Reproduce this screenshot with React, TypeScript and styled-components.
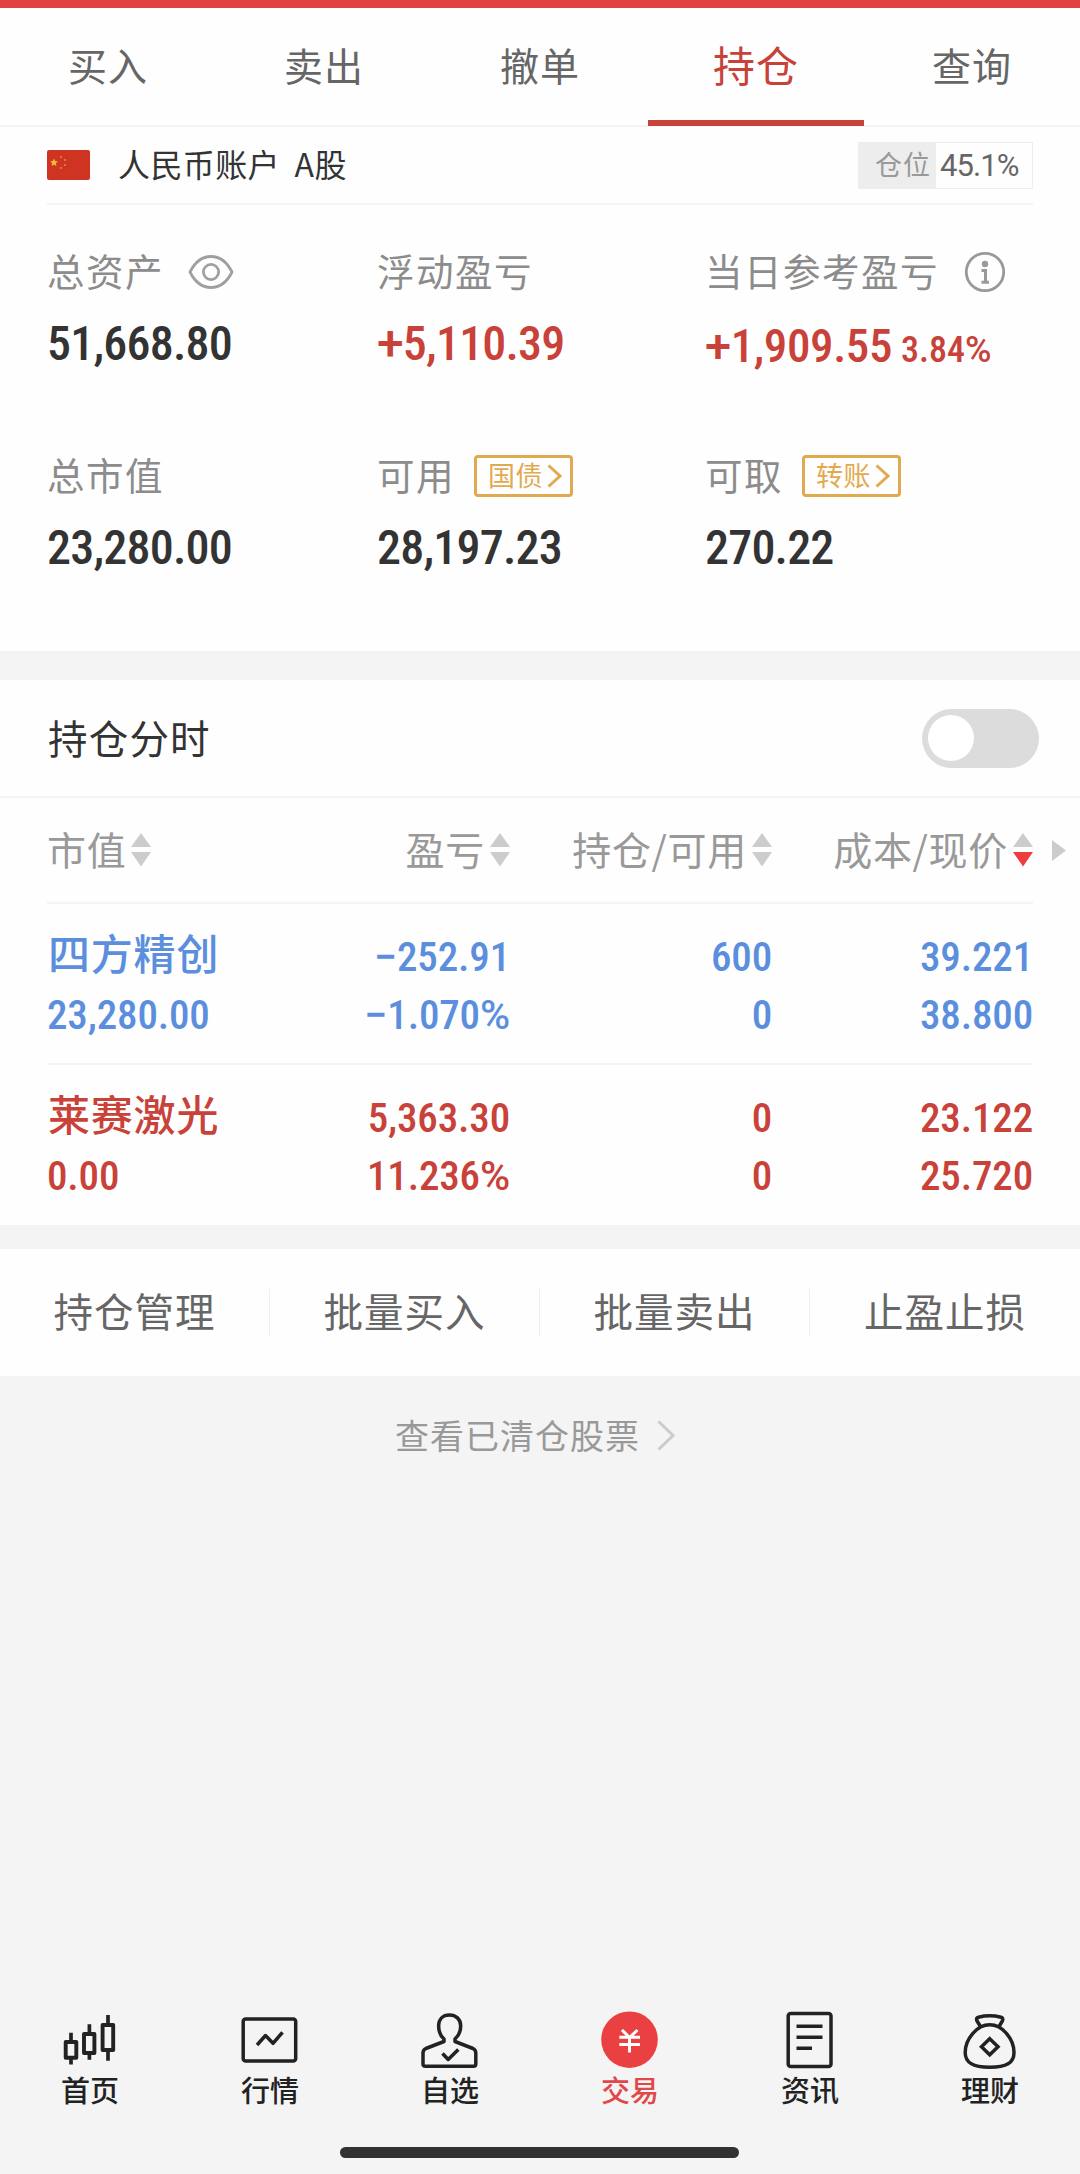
import React from "react";
import styled, { createGlobalStyle } from "styled-components";

const cjk = `"Noto Sans CJK SC", sans-serif`;
const din = `Roboto, "Noto Sans CJK SC", sans-serif`;
const red = "#c8423a";
const blue = "#5b8fde";
const ink = "#333333";

const GlobalStyle = createGlobalStyle`
  * { box-sizing: border-box; }
  body { margin: 0; background: #f4f4f4; font-family: ${cjk}; }
`;

const Screen = styled.div`
  width: 1080px;
  height: 2174px;
  display: flex;
  flex-direction: column;
  background: #f4f4f4;
  overflow: hidden;
`;

const StatusStrip = styled.div`
  height: 8px;
  flex: none;
  background: #e0433f;
`;

const Tabs = styled.nav`
  height: 119px;
  flex: none;
  display: grid;
  grid-template-columns: repeat(5, 1fr);
  background: #fefefe;
  border-bottom: 2px solid #f4f4f4;
`;

const Tab = styled.div<{ $active?: boolean }>`
  height: 118px;
  display: flex;
  justify-content: center;
  font-size: ${(p) => (p.$active ? 42 : 39)}px;
  letter-spacing: 1px;
  line-height: ${(p) => (p.$active ? 112 : 113)}px;
  color: ${(p) => (p.$active ? red : "#666666")};
  border-bottom: ${(p) => (p.$active ? `6px solid ${red}` : "none")};
`;

const Summary = styled.section`
  height: 524px;
  flex: none;
  padding: 0 47px;
  background: #fefefe;
`;

const AccountBar = styled.div`
  height: 78px;
  display: flex;
  align-items: center;
  border-bottom: 2px solid #f4f4f4;
`;

const AccountName = styled.span`
  margin-left: 28px;
  flex: 1;
  height: 70px;
  font-size: 32px;
  line-height: 66px;
  letter-spacing: 0.4px;
  word-spacing: 7px;
  color: ${ink};
`;

const Position = styled.div`
  width: 175px;
  height: 47px;
  display: flex;
  border: 1px solid #eeeeee;
`;

const PositionLabel = styled.span`
  width: 77px;
  padding-left: 16px;
  background: #ededed;
  color: #999999;
  font-size: 27px;
  letter-spacing: 1px;
  line-height: 42px;
`;

const PositionValue = styled.span`
  padding-left: 4px;
  color: #666666;
  font-family: ${din};
  font-size: 31px;
  font-stretch: 94%;
  letter-spacing: -0.9px;
  line-height: 46px;
`;

const Stats = styled.div`
  display: grid;
  grid-template-columns: 330px 328px 1fr;
  grid-auto-rows: 204px;
  padding-top: 35px;
`;

const StatLabel = styled.div`
  height: 64px;
  display: flex;
  align-items: center;
  font-size: 37.5px;
  letter-spacing: 1.5px;
  line-height: 60px;
  color: #8c8c8c;

  svg { flex: none; }
`;

const LabelText = styled.span<{ $gap?: number }>`
  height: 64px;
  line-height: 60px;
  margin-right: ${(p) => p.$gap ?? 0}px;
`;

const StatValue = styled.div<{ $color?: string; $low?: boolean }>`
  height: 80px;
  display: flex;
  align-items: baseline;
  line-height: ${(p) => (p.$low ? 83 : 80)}px;
  white-space: nowrap;
  color: ${(p) => p.$color ?? ink};
`;

const Digits = styled.span<{ $size: number; $gap?: number; $tight?: number }>`
  font-family: ${din};
  font-size: ${(p) => p.$size}px;
  font-weight: 500;
  font-stretch: 84%;
  letter-spacing: ${(p) => p.$tight ?? 0}px;
  margin-left: ${(p) => p.$gap ?? 0}px;
`;

const Wide = styled.span`
  font-stretch: 100%;
`;

/* Signs and percent marks are set wider than the condensed digits. */
const Num = ({ children, size, gap, tight }: { children: string; size: number; gap?: number; tight?: number }) => (
  <Digits $size={size} $gap={gap} $tight={tight}>
    {children.split(/([+−%])/).map((part, i) => (i % 2 ? <Wide key={i}>{part}</Wide> : part))}
  </Digits>
);

const Tag = styled.span`
  width: 99px;
  height: 42px;
  display: flex;
  align-items: center;
  border: 3px solid #e2aa50;
  border-radius: 4px;
  padding-left: 11px;
  color: #e2aa50;
  font-size: 27px;
  letter-spacing: 0.5px;
  line-height: 32px;
`;

const TagText = styled.span`
  height: 36px;
  line-height: 33px;
  margin-right: 4px;
`;

const Gap = styled.div<{ $h: number }>`
  height: ${(p) => p.$h}px;
  flex: none;
`;

const SwitchRow = styled.div`
  height: 118px;
  flex: none;
  display: flex;
  align-items: center;
  justify-content: space-between;
  padding: 0 41px 0 48px;
  background: #fefefe;
  border-bottom: 2px solid #f4f4f4;
  font-size: 39.5px;
  letter-spacing: 1.2px;
  color: ${ink};
`;

const SwitchText = styled.span`
  line-height: 81px;
  height: 84px;
`;

const Toggle = styled.button`
  width: 117px;
  height: 59px;
  padding: 6px;
  border: 0;
  border-radius: 30px;
  background: #dcdcdc;
`;

const Knob = styled.span`
  display: block;
  width: 46px;
  height: 46px;
  border-radius: 50%;
  background: #ffffff;
`;

const Table = styled.section`
  height: 427px;
  flex: none;
  background: #fefefe;
  padding: 0 47px;
`;

const columns = "200px 263px 262px 261px";

const HeadRow = styled.div`
  display: grid;
  grid-template-columns: ${columns} 33px;
  width: 1019px;
  height: 104px;
  align-items: center;
`;

const Rule = styled.div`
  height: 2px;
  background: #f4f4f4;
`;

const HeadCell = styled.div<{ $left?: boolean }>`
  display: flex;
  align-items: center;
  justify-content: ${(p) => (p.$left ? "flex-start" : "flex-end")};
  gap: 5px;
  font-size: 39px;
  letter-spacing: 0.7px;
  color: #999999;
  white-space: nowrap;
`;

const HeadText = styled.span`
  height: 64px;
  line-height: 60px;
`;

const More = styled.div`
  padding-left: 19px;
  display: flex;
`;

const Holding = styled.div<{ $color: string }>`
  display: grid;
  grid-template-columns: ${columns};
  grid-template-rows: 58px 58px;
  height: 159px;
  padding-top: 22px;
  color: ${(p) => p.$color};
`;

const HoldingName = styled.div`
  padding-left: 1px;
  font-size: 42px;
  font-weight: 500;
  letter-spacing: 0.8px;
  line-height: 52px;
  white-space: nowrap;
`;

const Cell = styled.div<{ $left?: boolean }>`
  text-align: ${(p) => (p.$left ? "left" : "right")};
  line-height: 62px;
`;

const Actions = styled.section`
  height: 127px;
  flex: none;
  display: grid;
  grid-template-columns: repeat(4, 1fr);
  align-items: center;
  background: #fefefe;
`;

const Action = styled.div`
  height: 47px;
  text-align: center;
  font-size: 39.5px;
  letter-spacing: 1px;
  line-height: 42px;
  color: #666666;
  border-right: 1px solid #eeeeee;

  &:last-child { border-right: 0; }
`;

const Cleared = styled.div`
  height: 118px;
  flex: none;
  display: flex;
  align-items: center;
  padding-left: 395px;
  gap: 17px;
  font-size: 34px;
  letter-spacing: 1px;
  line-height: 114px;
  color: #999999;
`;

const Spacer = styled.div`
  flex: 1;
`;

const BottomNav = styled.nav`
  height: 137px;
  flex: none;
  display: grid;
  grid-template-columns: repeat(6, 1fr);
`;

const NavItem = styled.div<{ $active?: boolean }>`
  display: flex;
  flex-direction: column;
  align-items: center;
  font-size: 29px;
  font-weight: 500;
  line-height: 38px;
  color: ${(p) => (p.$active ? "#e0484a" : "#222222")};
`;

const HomeBar = styled.div`
  width: 399px;
  height: 11px;
  flex: none;
  margin: 0 0 16px 340px;
  border-radius: 6px;
  background: #323232;
`;

const Flag = () => (
  <svg width="43" height="30" viewBox="0 0 43 30">
    <rect width="43" height="30" rx="2" fill="#cf3322" />
    <path d="M7 8.6l1.2 2.5 2.6.3-1.9 1.9.5 2.8L7 14.8l-2.4 1.3.5-2.8-1.9-1.9 2.6-.3z" fill="#f3b93a" />
    <circle cx="14" cy="7" r="1.1" fill="#d98a2c" />
    <circle cx="18" cy="10" r="1.1" fill="#d98a2c" />
    <circle cx="18" cy="15" r="1.1" fill="#d98a2c" />
    <circle cx="14" cy="18" r="1.1" fill="#d98a2c" />
  </svg>
);

const Eye = () => (
  <svg width="46" height="36" viewBox="0 0 46 36" fill="none" stroke="#a0a0a0" strokeWidth="2.8">
    <path d="M2 18C7 8 14.5 2.5 23 2.5S39 8 44 18C39 28 31.500 33.500 23 33.500S7 28 2 18z" strokeLinejoin="round" />
    <circle cx="23" cy="18" r="7.600" />
  </svg>
);

const Info = () => (
  <svg width="42" height="42" viewBox="0 0 42 42" fill="none" stroke="#999999">
    <circle cx="21" cy="21" r="18.700" strokeWidth="2.800" />
    <circle cx="21" cy="13" r="3.200" fill="#999999" stroke="none" />
    <path d="M17.500 19.500h4v11.500M17.500 31.200h7.500" strokeWidth="3" />
  </svg>
);

const Chevron = ({ w, h, color, stroke }: { w: number; h: number; color: string; stroke: number }) => (
  <svg width={w} height={h} viewBox={`0 0 ${w} ${h}`} fill="none" stroke={color} strokeWidth={stroke}>
    <path d={`M1.500 1.500L${w - 2} ${h / 2}L1.500 ${h - 1.5}`} />
  </svg>
);

const Sort = ({ down }: { down?: boolean }) => (
  <svg width="20" height="34" viewBox="0 0 20 34">
    <path d="M10 0l10 14H0z" fill="#cccccc" />
    <path d="M10 33.500L0 19h20z" fill={down ? "#ee3d3f" : "#cccccc"} />
  </svg>
);

const NavIcon = ({ children }: { children: React.ReactNode }) => (
  <svg width="60" height="60" viewBox="0 0 60 60" fill="none" stroke="#222222" strokeWidth="3.5" strokeLinejoin="round">
    {children}
  </svg>
);

const navItems = [
  {
    label: "首页",
    icon: (
      <NavIcon>
        <rect x="5.700" y="32" width="10.600" height="15.800" strokeWidth="3.900" />
        <rect x="24" y="24" width="10.400" height="19" strokeWidth="3.900" />
        <rect x="42.600" y="15" width="10.600" height="25" strokeWidth="3.900" />
        <path d="M11 22.700v9M11 47.500v7M29.400 14.200v9.800M29.400 42.300v7.400M48 5v9M48 40v10.700" strokeWidth="3.700" />
      </NavIcon>
    ),
  },
  {
    label: "行情",
    icon: (
      <NavIcon>
        <rect x="3.200" y="8.900" width="52.500" height="42.200" rx="2.500" />
        <path d="M17 35L25.500 25.500L33 33.300L42.500 22.300" />
      </NavIcon>
    ),
  },
  {
    label: "自选",
    icon: (
      <NavIcon>
        <path d="M24 31.500V29C20 25.500 18.600 21.500 18.600 16C18.600 9 23 5 29.400 5S40.700 9 40.700 16C40.700 21.500 39 25.500 35 29V31.500L53 38.500Q55.800 39.800 55.800 43V54Q55.800 56.300 53.500 56.300H5.300Q3 56.300 3 54V43Q3 39.800 5.800 38.500Z" />
        <path d="M22.500 43.500L28.200 49.500L38.300 39.500" />
      </NavIcon>
    ),
  },
  {
    label: "交易",
    active: true,
    icon: (
      <NavIcon>
        <circle cx="29.500" cy="29.700" r="28.300" fill="#eb4042" stroke="none" />
        <path d="M22 20L29.500 27.500L37.500 20M29.500 27V42.500M19.300 27.200H40M19.300 34.500H40" stroke="#ffffff" strokeWidth="3" strokeLinejoin="miter" />
      </NavIcon>
    ),
  },
  {
    label: "资讯",
    icon: (
      <NavIcon>
        <rect x="8.200" y="3.400" width="42.800" height="53" rx="2.500" />
        <path d="M16.500 16.200H42.500M16.500 27.200H42.500M16.500 38.300H32" />
      </NavIcon>
    ),
  },
  {
    label: "理财",
    icon: (
      <NavIcon>
        <path d="M21 17.500L16.800 10.500Q15.800 8 18.500 7.200Q29.700 4.500 41 7.200Q43.500 8 42.600 10.500L38.500 17.500" />
        <path d="M29.700 14.800C17 14.800 5.200 29 5.200 42.500C5.200 53 13 57.300 29.700 57.300S54 53 54 42.500C54 29 42.500 14.800 29.700 14.800z" />
        <path d="M29.700 28.700L38 36.700L29.700 44.700L21.500 36.700z" strokeLinejoin="miter" />
      </NavIcon>
    ),
  },
];

const holdings = [
  { name: "四方精创", color: blue, value: "23,280.00", profit: "−252.91", rate: "−1.070%", held: "600", free: "0", cost: "39.221", price: "38.800" },
  { name: "莱赛激光", color: red, value: "0.00", profit: "5,363.30", rate: "11.236%", held: "0", free: "0", cost: "23.122", price: "25.720" },
];

export default function App() {
  return (
    <>
      <GlobalStyle />
      <Screen>
        <StatusStrip />
        <Tabs>
          {["买入", "卖出", "撤单", "持仓", "查询"].map((t) => (
            <Tab key={t} $active={t === "持仓"}>{t}</Tab>
          ))}
        </Tabs>

        <Summary>
          <AccountBar>
            <Flag />
            <AccountName>人民币账户 A股</AccountName>
            <Position>
              <PositionLabel>仓位</PositionLabel>
              <PositionValue>45.1%</PositionValue>
            </Position>
          </AccountBar>
          <Stats>
            <div>
              <StatLabel><LabelText $gap={24}>总资产</LabelText><Eye /></StatLabel>
              <StatValue><Num size={48} tight={-0.8}>51,668.80</Num></StatValue>
            </div>
            <div>
              <StatLabel><LabelText>浮动盈亏</LabelText></StatLabel>
              <StatValue $color={red}><Num size={48} tight={-0.8}>+5,110.39</Num></StatValue>
            </div>
            <div>
              <StatLabel><LabelText $gap={25}>当日参考盈亏</LabelText><Info /></StatLabel>
              <StatValue $color={red} $low><Num size={47} tight={-0.4}>+1,909.55</Num><Num size={36} gap={9}>3.84%</Num></StatValue>
            </div>
            <div>
              <StatLabel><LabelText>总市值</LabelText></StatLabel>
              <StatValue><Num size={48} tight={-0.8}>23,280.00</Num></StatValue>
            </div>
            <div>
              <StatLabel>
                <LabelText $gap={19}>可用</LabelText>
                <Tag><TagText>国债</TagText><Chevron w={15} h={24} color="#e2aa50" stroke={3} /></Tag>
              </StatLabel>
              <StatValue><Num size={48} tight={-0.8}>28,197.23</Num></StatValue>
            </div>
            <div>
              <StatLabel>
                <LabelText $gap={19}>可取</LabelText>
                <Tag><TagText>转账</TagText><Chevron w={15} h={24} color="#e2aa50" stroke={3} /></Tag>
              </StatLabel>
              <StatValue><Num size={48} tight={-0.8}>270.22</Num></StatValue>
            </div>
          </Stats>
        </Summary>

        <Gap $h={29} />
        <SwitchRow>
          <SwitchText>持仓分时</SwitchText>
          <Toggle><Knob /></Toggle>
        </SwitchRow>

        <Table>
          <HeadRow>
            <HeadCell $left><HeadText>市值</HeadText><Sort /></HeadCell>
            <HeadCell><HeadText>盈亏</HeadText><Sort /></HeadCell>
            <HeadCell><HeadText>持仓/可用</HeadText><Sort /></HeadCell>
            <HeadCell><HeadText>成本/现价</HeadText><Sort down /></HeadCell>
            <More>
              <svg width="14" height="21" viewBox="0 0 14 21"><path d="M0 0l14 10.500L0 21z" fill="#cccccc" /></svg>
            </More>
          </HeadRow>
          {holdings.map((h) => (
            <React.Fragment key={h.name}>
              <Rule />
              <Holding $color={h.color}>
                <HoldingName>{h.name}</HoldingName>
                <Cell><Num size={41} tight={-0.15}>{h.profit}</Num></Cell>
                <Cell><Num size={41} tight={-0.15}>{h.held}</Num></Cell>
                <Cell><Num size={41} tight={-0.15}>{h.cost}</Num></Cell>
                <Cell $left><Num size={41} tight={-0.15}>{h.value}</Num></Cell>
                <Cell><Num size={41} tight={-0.15}>{h.rate}</Num></Cell>
                <Cell><Num size={41} tight={-0.15}>{h.free}</Num></Cell>
                <Cell><Num size={41} tight={-0.15}>{h.price}</Num></Cell>
              </Holding>
            </React.Fragment>
          ))}
        </Table>

        <Gap $h={24} />
        <Actions>
          {["持仓管理", "批量买入", "批量卖出", "止盈止损"].map((a) => (
            <Action key={a}>{a}</Action>
          ))}
        </Actions>
        <Cleared>
          查看已清仓股票
          <Chevron w={18} h={31} color="#cccccc" stroke={3} />
        </Cleared>
        <Spacer />
        <BottomNav>
          {navItems.map((n) => (
            <NavItem key={n.label} $active={n.active}>
              {n.icon}
              {n.label}
            </NavItem>
          ))}
        </BottomNav>
        <HomeBar />
      </Screen>
    </>
  );
}
